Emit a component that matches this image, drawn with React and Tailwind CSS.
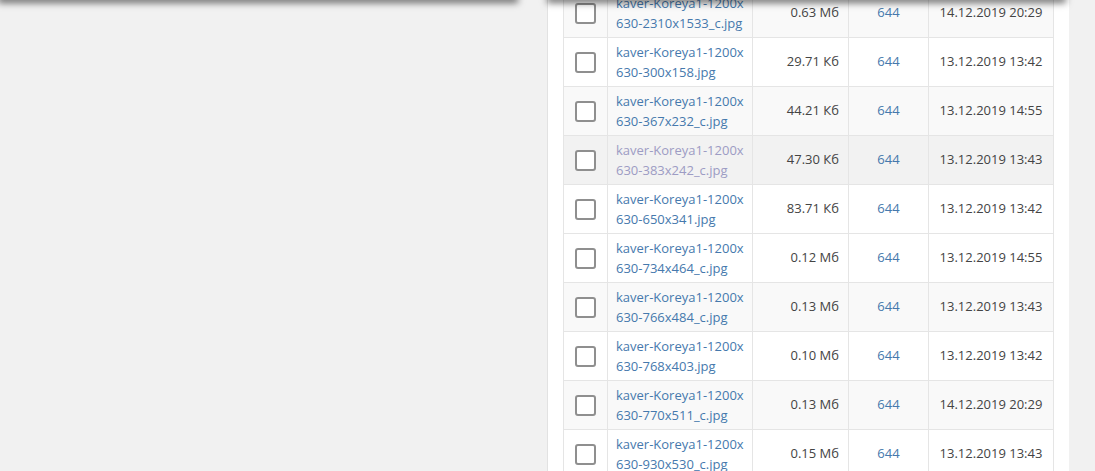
import React from 'react'

const rows = [
  { name: '630-2310x1533_c.jpg', size: '0.63 Мб', date: '14.12.2019 20:29', bg: 'bg-[#f9f9f9]' },
  { name: '630-300x158.jpg', size: '29.71 Кб', date: '13.12.2019 13:42', bg: 'bg-white' },
  { name: '630-367x232_c.jpg', size: '44.21 Кб', date: '13.12.2019 14:55', bg: 'bg-[#f9f9f9]' },
  { name: '630-383x242_c.jpg', size: '47.30 Кб', date: '13.12.2019 13:43', bg: 'bg-[#f2f2f2]', hover: true },
  { name: '630-650x341.jpg', size: '83.71 Кб', date: '13.12.2019 13:42', bg: 'bg-white' },
  { name: '630-734x464_c.jpg', size: '0.12 Мб', date: '13.12.2019 14:55', bg: 'bg-white' },
  { name: '630-766x484_c.jpg', size: '0.13 Мб', date: '13.12.2019 13:43', bg: 'bg-[#f9f9f9]' },
  { name: '630-768x403.jpg', size: '0.10 Мб', date: '13.12.2019 13:42', bg: 'bg-white' },
  { name: '630-770x511_c.jpg', size: '0.13 Мб', date: '14.12.2019 20:29', bg: 'bg-[#f9f9f9]' },
  { name: '630-930x530_c.jpg', size: '0.15 Мб', date: '13.12.2019 13:43', bg: 'bg-white' },
]

export default function App() {
  return (
    <div className="relative h-[471px] w-[1095px] overflow-hidden bg-[#f1f1f1] font-['Open_Sans',sans-serif] text-[13px] text-[#444]">
      <div className="ml-[547px] flow-root h-full w-[522px] border-l border-[#e2e2e2] bg-white px-[15px]">
        <table className="-mt-[12px] w-[490px] table-fixed border-collapse">
          <colgroup>
            <col className="w-[44px]" />
            <col className="w-[145px]" />
            <col className="w-[96px]" />
            <col className="w-[80px]" />
            <col className="w-[125px]" />
          </colgroup>
          <tbody>
            {rows.map((r) => (
              <tr key={r.name} className={`h-[49px] ${r.bg}`}>
                <td className="border border-[#e5e5e5] p-0 text-center align-middle">
                  <span className="inline-block h-[21px] w-[21px] rounded-[3px] border-2 border-[#8f8f8f] bg-white align-middle" />
                </td>
                <td className="border border-[#e5e5e5] py-[4px] pl-[8px] pr-[4px] align-middle leading-[20px]">
                  <a className={r.hover ? 'text-[#9d9cc4]' : 'text-[#4679ad]'}>
                    kaver-Koreya1-1200x
                    <br />
                    {r.name}
                  </a>
                </td>
                <td className="border border-[#e5e5e5] pr-[9px] text-right align-middle">{r.size}</td>
                <td className="border border-[#e5e5e5] text-center align-middle text-[#4679ad]">644</td>
                <td className="border border-[#e5e5e5] text-center align-middle">{r.date}</td>
              </tr>
            ))}
          </tbody>
        </table>
      </div>
      <div className="absolute left-0 top-[-4px] h-[4px] w-[516px] shadow-[0_1px_7px_2px_rgba(0,0,0,0.55)]" />
      <div className="absolute left-[549px] top-[-4px] h-[4px] w-[515px] shadow-[0_1px_7px_2px_rgba(0,0,0,0.55)]" />
    </div>
  )
}
